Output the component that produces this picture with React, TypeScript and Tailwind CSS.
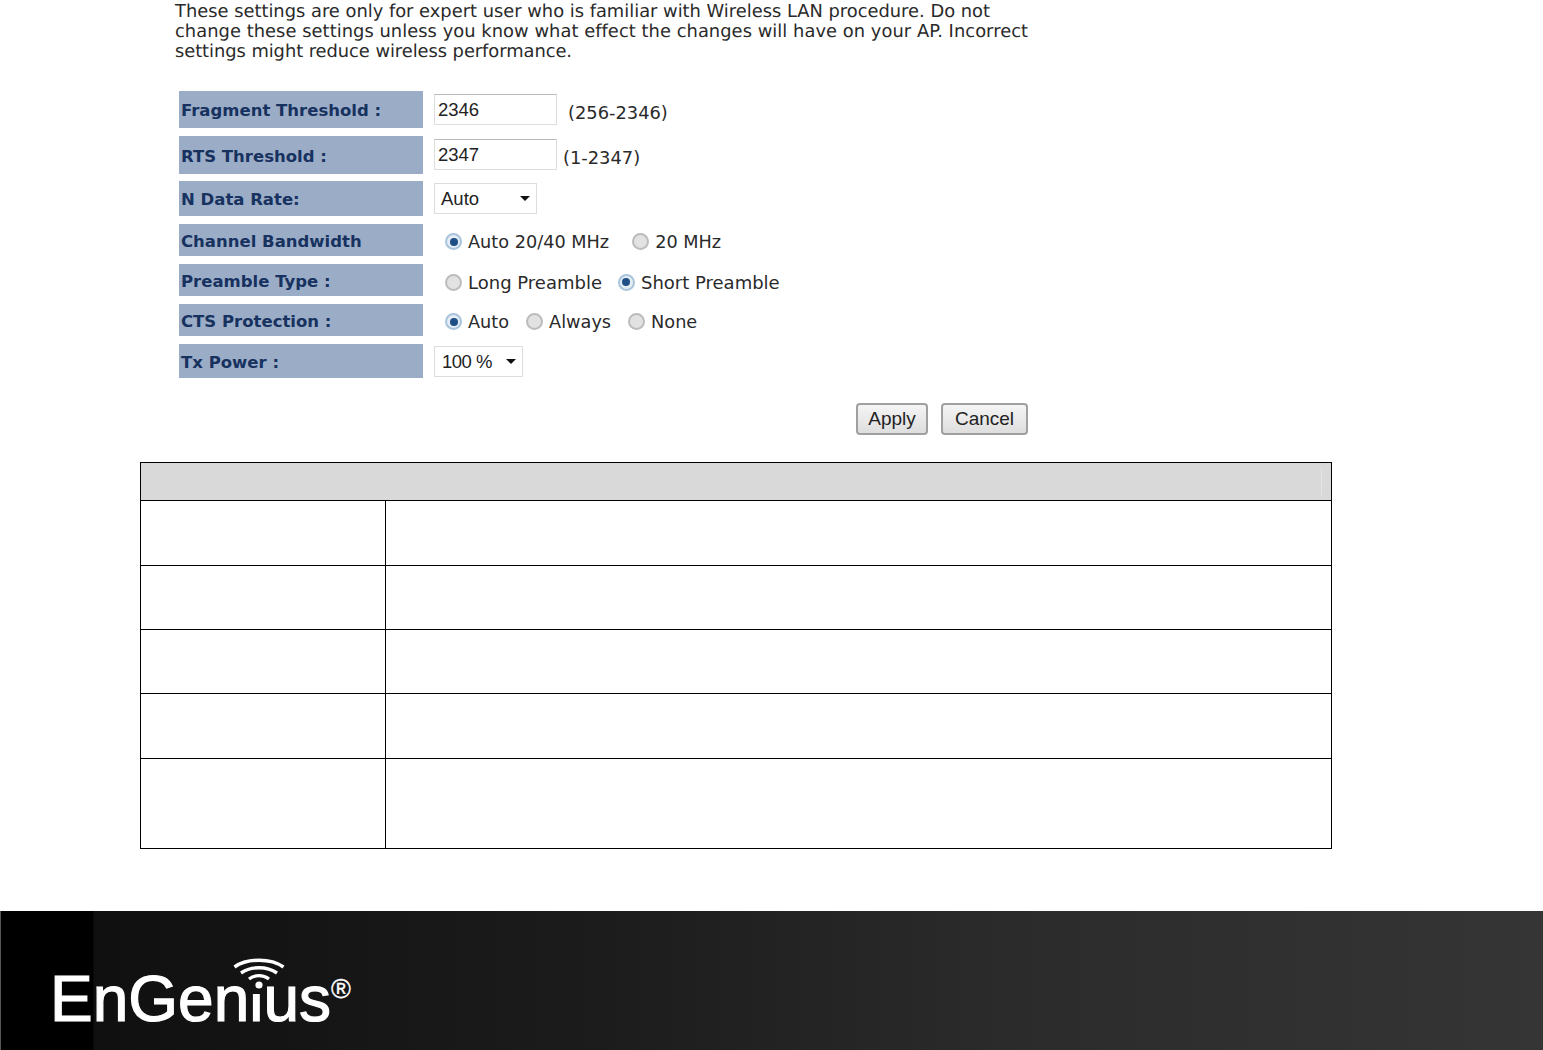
import React from "react";

const Radio = ({ on }: { on?: boolean }) => (
  <span
    className={
      on
        ? "flex h-[17px] w-[17px] shrink-0 items-center justify-center rounded-full border-2 border-[#a9c4dc] bg-[#e4edf4]"
        : "block h-[17px] w-[17px] shrink-0 rounded-full border-2 border-[#bcbcbc] bg-[#e2e2e2]"
    }
  >
    {on && <span className="block h-[8px] w-[8px] rounded-full bg-[#1f4f86]" />}
  </span>
);

const Label = ({ text, h }: { text: string; h: string }) => (
  <div className={`flex w-[244px] shrink-0 items-center bg-[#9bacc7] pl-[2px] pt-[4px] text-[16.5px] font-bold text-[#17325f] ${h}`}>
    {text}
  </div>
);

const Caret = () => <span className="block h-0 w-0 border-x-[5px] border-t-[5px] border-x-transparent border-t-[#111]" />;

const Option = ({ text, on, gap }: { text: string; on?: boolean; gap?: string }) => (
  <span className={`flex items-center gap-[6px] ${gap ?? ""}`}>
    <Radio on={on} />
    <span>{text}</span>
  </span>
);

const Wifi = () => (
  <svg width="52" height="32" viewBox="0 0 52 32" fill="none" stroke="white" strokeWidth="3.4" className="block">
    <path d="M1.5 9 C14 0 38 0 50.5 9" />
    <path d="M8 15 C18 8 34 8 44 15" />
    <path d="M16 21 C22 16.5 30 16.5 36 21" />
    <circle cx="26" cy="27" r="3.6" fill="white" stroke="none" />
  </svg>
);

export default function App() {
  return (
    <div className="flex h-[1050px] w-[1543px] flex-col overflow-hidden bg-white font-['DejaVu_Sans',sans-serif] text-[#2a2a2a]">
      <p className="ml-[175px] mt-[2px] w-[880px] text-[17.85px] leading-[20px] [text-rendering:geometricPrecision]">
        These settings are only for expert user who is familiar with Wireless LAN procedure. Do not
        <br />
        <span className="tracking-[0.05px]">change these settings unless you know what effect the changes will have on your AP. Incorrect</span>
        <br />
        <span className="tracking-[-0.05px]">settings might reduce wireless performance.</span>
      </p>

      <div className="ml-[179px] mt-[29px] flex flex-col">
        <div className="flex">
          <Label text="Fragment Threshold :" h="h-[37px]" />
          <div className="ml-[11px] mt-[3px] h-[31px] w-[123px] border border-[#ddd] border-t-[#bbb] pl-[3px] pt-[1px] font-['Liberation_Sans',sans-serif] text-[18.5px] leading-[28px] text-[#222]">2346</div>
          <span className="ml-[11px] mt-[11px] text-[17.85px] leading-[22px]">(256-2346)</span>
        </div>
        <div className="mt-[8px] flex">
          <Label text="RTS Threshold :" h="h-[38px]" />
          <div className="ml-[11px] mt-[3px] h-[31px] w-[123px] border border-[#ddd] border-t-[#bbb] pl-[3px] pt-[1px] font-['Liberation_Sans',sans-serif] text-[18.5px] leading-[28px] text-[#222]">2347</div>
          <span className="ml-[6px] mt-[11px] text-[17.85px] leading-[22px]">(1-2347)</span>
        </div>
        <div className="mt-[7px] flex">
          <Label text="N Data Rate:" h="h-[35px]" />
          <div className="ml-[11px] mt-[2px] flex h-[31px] w-[103px] items-center justify-between border border-[#ddd] px-[6px] font-['Liberation_Sans',sans-serif] text-[18.5px] text-[#222]">
            Auto
            <Caret />
          </div>
        </div>
        <div className="mt-[8px] flex">
          <Label text="Channel Bandwidth" h="h-[32px]" />
          <div className="ml-[22px] flex h-[32px] items-center pt-[4px] text-[17.7px]">
            <Option text="Auto 20/40 MHz" on />
            <Option text="20 MHz" gap="ml-[23px]" />
          </div>
        </div>
        <div className="mt-[8px] flex">
          <Label text="Preamble Type :" h="h-[32px]" />
          <div className="ml-[22px] flex h-[32px] items-center pt-[4px] text-[18px]">
            <Option text="Long Preamble" />
            <Option text="Short Preamble" on gap="ml-[16px]" />
          </div>
        </div>
        <div className="mt-[8px] flex">
          <Label text="CTS Protection :" h="h-[32px]" />
          <div className="ml-[22px] flex h-[32px] items-center pt-[4px] text-[17.7px]">
            <Option text="Auto" on />
            <Option text="Always" gap="ml-[17px]" />
            <Option text="None" gap="ml-[17px]" />
          </div>
        </div>
        <div className="mt-[8px] flex">
          <Label text="Tx Power :" h="h-[34px]" />
          <div className="ml-[11px] mt-[2px] flex h-[31px] w-[89px] items-center justify-between border border-[#ddd] pl-[7px] pr-[6px] font-['Liberation_Sans',sans-serif] text-[18.5px] tracking-[-0.5px] text-[#222]">
            100 %
            <Caret />
          </div>
        </div>
      </div>

      <div className="ml-[856px] mt-[25px] flex gap-[13px] font-['Liberation_Sans',sans-serif] text-[19px] text-[#222]">
        <div className="flex h-[32px] w-[72px] items-center justify-center rounded-[4px] border-2 border-[#a0a0a0] bg-linear-to-b from-[#f5f5f5] to-[#dedede]">Apply</div>
        <div className="flex h-[32px] w-[87px] items-center justify-center rounded-[4px] border-2 border-[#a0a0a0] bg-linear-to-b from-[#f5f5f5] to-[#dedede]">Cancel</div>
      </div>

      <div className="ml-[140px] mt-[27px] w-[1192px] border border-black">
        <div className="flex h-[37px] justify-end bg-[#d9d9d9] pr-[9px] pt-[6px]">
          <span className="block h-[26px] w-px bg-[#e6e6e6]" />
        </div>
        {["h-[65px]", "h-[64px]", "h-[64px]", "h-[65px]", "h-[90px]"].map((h, i) => (
          <div key={i} className={`flex border-t border-black ${h}`}>
            <div className="w-[245px] border-r border-black" />
            <div className="flex-1" />
          </div>
        ))}
      </div>

      <div className="mt-[62px] flex h-[139px] flex-col border-l border-[#555] bg-[linear-gradient(90deg,#000_0,#000_92px,#101010_93px,#1c1c1c_600px,#2b2b2b_1000px,#353535_1543px)] pl-[51px]">
        <div className="relative mt-[47px] h-[72px] w-[310px] font-['Liberation_Sans',sans-serif] text-[64px] leading-[72px] text-white [-webkit-text-stroke:1.2px_white]">
          <span className="absolute left-[181px] top-0">
            <Wifi />
          </span>
          <span className="absolute left-[279px] top-[18px] text-[27px] leading-[27px] [-webkit-text-stroke:0.3px_white]">®</span>
          <span className="absolute bottom-[-5px] left-[-2px] flex">
            EnGen
            <span className="[clip-path:inset(31px_0_0_0)]">i</span>
            us
          </span>
        </div>
      </div>
    </div>
  );
}
